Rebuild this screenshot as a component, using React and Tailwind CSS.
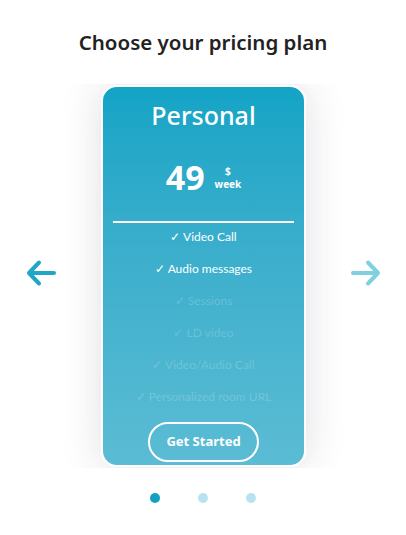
import React from "react";

const features = [
  { t: "Video Call", on: true },
  { t: "Audio messages", on: true },
  { t: "Sessions", on: false },
  { t: "LD video", on: false },
  { t: "Video/Audio Call", on: false },
  { t: "Personalized room URL", on: false },
];

function Arrow({ dir, color }) {
  return (
    <svg width="32" height="28" viewBox="0 0 32 28" fill="none">
      {dir === "left" ? (
        <path d="M29 14H4.5M14 3.5L4 14L14 24.5" stroke={color} strokeWidth="4" strokeLinecap="round" strokeLinejoin="round" />
      ) : (
        <path d="M3 14H27.5M18 3.5L28 14L18 24.5" stroke={color} strokeWidth="4" strokeLinecap="round" strokeLinejoin="round" />
      )}
    </svg>
  );
}

export default function App() {
  return (
    <div className="w-[406px] h-[535px] bg-white flex flex-col items-center" style={{ fontFamily: '"Noto Sans", "Open Sans", sans-serif' }}>
      <h1 className="mt-[27px] text-[20.5px] leading-[30px] font-semibold text-[#222]">Choose your pricing plan</h1>
      <div className="mt-[27px] w-full h-[384px] overflow-hidden flex items-start justify-between">
        <div className="ml-[25px] mt-[175px]">
          <Arrow dir="left" color="#22a6c8" />
        </div>
        <div className="mt-[1px] w-[205px] h-[382px] rounded-[16px] border-2 border-white bg-gradient-to-b from-[#12a4c6] to-[#5bbcd4] shadow-[0_0_40px_rgba(40,40,70,0.15)] flex flex-col items-center text-white">
          <div className="mt-[12px] text-[25px] leading-[32px] font-medium">Personal</div>
          <div className="mt-[26px] flex items-center">
            <span className="text-[34px] leading-[40px] font-bold">49</span>
            <span className="ml-[10px] flex flex-col items-center text-[10px] leading-[13px] font-bold mt-[2px]">
              <span>$</span>
              <span>week</span>
            </span>
          </div>
          <div className="mt-[24px] w-[181px] h-[2px] bg-white" />
          <div className="-mt-[2px] flex flex-col items-center" style={{ fontFamily: 'Lato, "Noto Sans", sans-serif' }}>
            {features.map((f) => (
              <div key={f.t} className={`h-[32px] flex items-center text-[12px] ${f.on ? "text-white" : "text-white/20"}`}>
                ✓ {f.t}
              </div>
            ))}
          </div>
          <button className="mt-[9px] w-[111px] h-[40px] rounded-full border-2 border-white text-[13px] font-bold text-white">
            Get Started
          </button>
        </div>
        <div className="mr-[24px] mt-[175px]">
          <Arrow dir="right" color="#7fd0e1" />
        </div>
      </div>
      <div className="mt-[25px] flex gap-[38px]">
        <div className="w-[10px] h-[10px] rounded-full bg-[#12a0c3]" />
        <div className="w-[10px] h-[10px] rounded-full bg-[#b5e3ee]" />
        <div className="w-[10px] h-[10px] rounded-full bg-[#b5e3ee]" />
      </div>
    </div>
  );
}
